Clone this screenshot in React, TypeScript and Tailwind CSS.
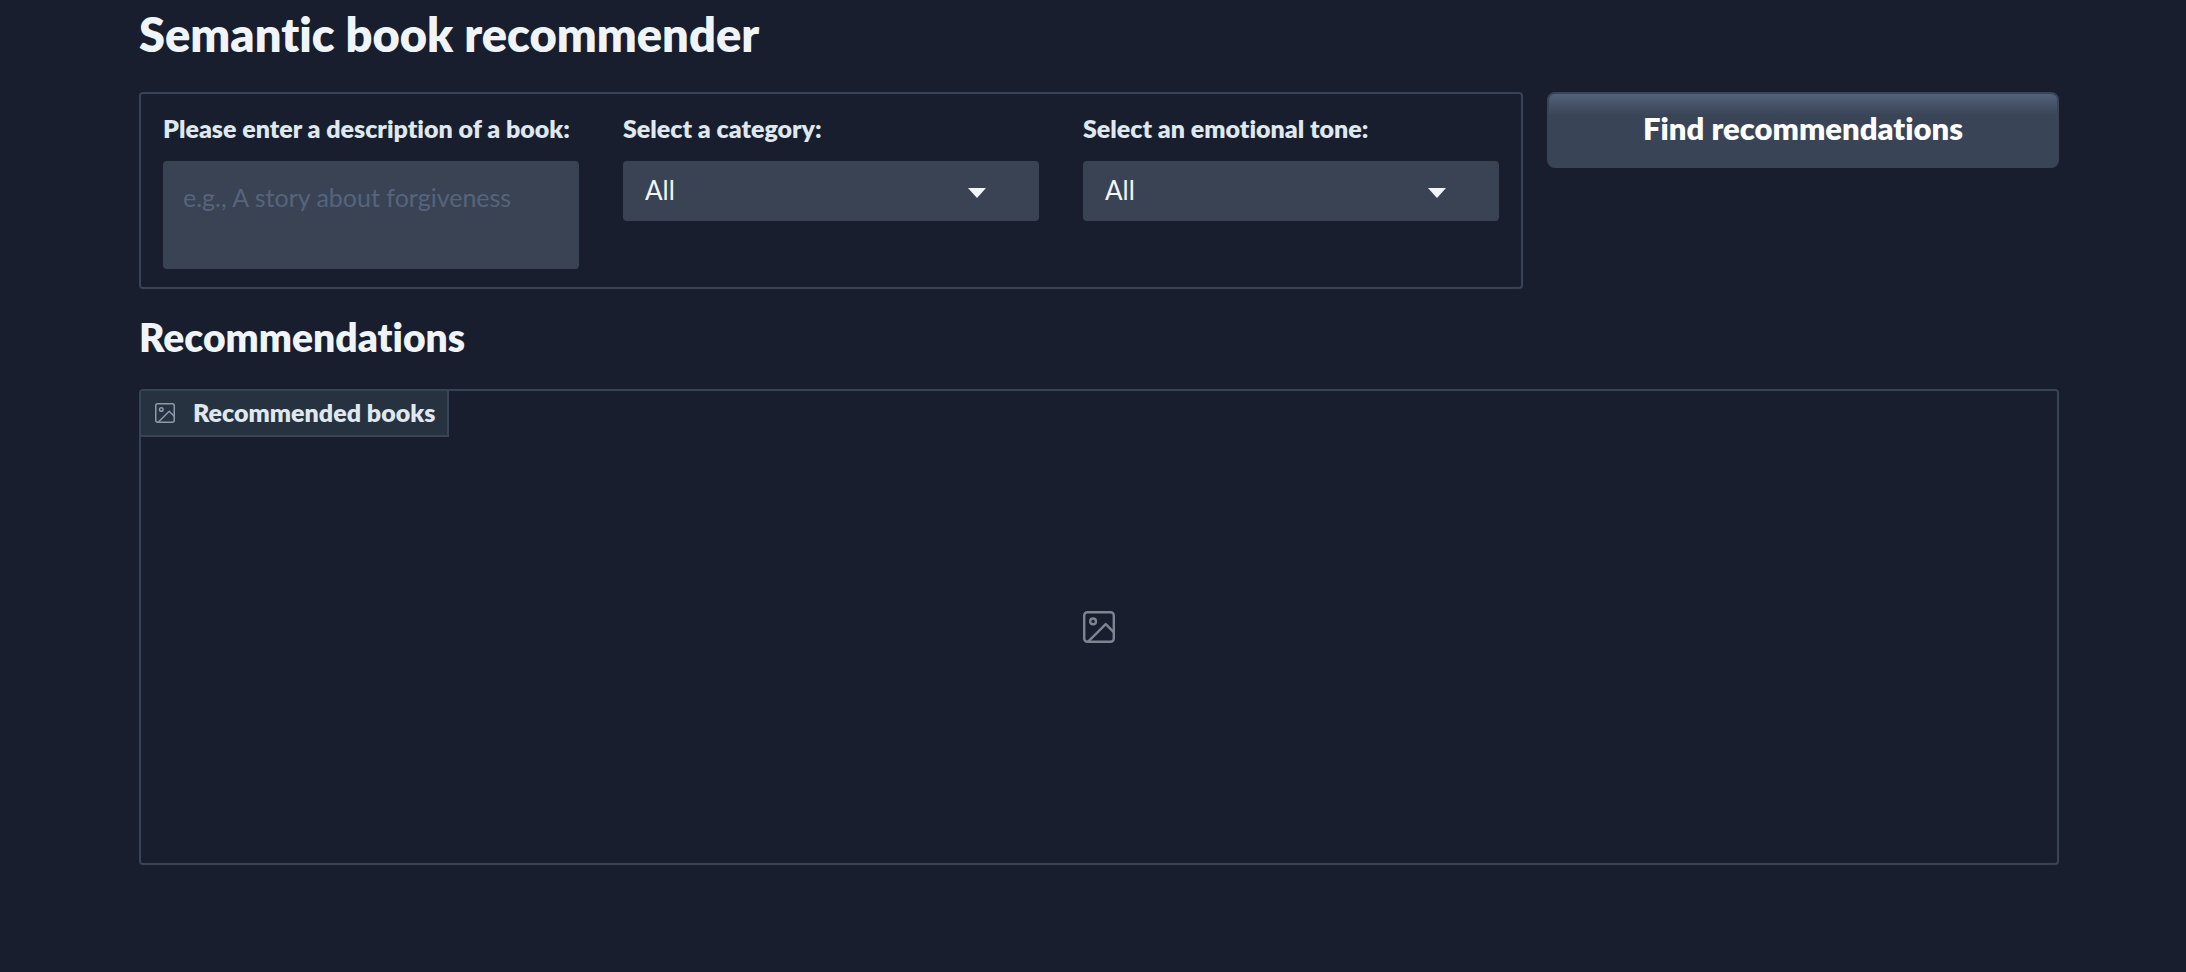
import { useState } from "react";

const CATEGORIES = ["All", "Fiction", "Nonfiction", "Children's Fiction", "Children's Nonfiction"];
const TONES = ["All", "Happy", "Surprising", "Angry", "Suspenseful", "Sad"];

function ImageIcon({ className }: { className: string }) {
  return (
    <svg
      className={className}
      viewBox="0 0 20 20"
      fill="none"
      stroke="currentColor"
      strokeWidth="1.5"
      strokeLinecap="round"
      strokeLinejoin="round"
      aria-hidden="true"
    >
      <rect x="0.75" y="0.75" width="18.5" height="18.5" rx="2" />
      <circle cx="6.3" cy="6.5" r="1.8" />
      <path d="M19.2 13.2 14.2 8.2 3.2 19.2" />
    </svg>
  );
}

type DropdownProps = { id: string; label: string; options: string[] };

function Dropdown({ id, label, options }: DropdownProps) {
  const [value, setValue] = useState(options[0]);
  return (
    <div className="flex min-w-0 flex-col gap-[17px]">
      <label htmlFor={id} className="text-[25px]/8 font-extrabold whitespace-nowrap text-[#dfe7ef]">
        {label}
      </label>
      <div className="relative">
        <select
          id={id}
          value={value}
          onChange={(e) => setValue(e.target.value)}
          className="block h-15 w-full appearance-none rounded bg-[#394354] px-[22px] pb-0.5 text-[26px] text-[#f1f5f9] outline-none"
        >
          {options.map((o) => (
            <option key={o}>{o}</option>
          ))}
        </select>
        <svg
          className="pointer-events-none absolute top-[27px] right-[53px] h-[10px] w-[18px] fill-[#f1f5f9]"
          viewBox="0 0 18 10"
          aria-hidden="true"
        >
          <path d="M0 0h18L9 10z" />
        </svg>
      </div>
    </div>
  );
}

export default function App() {
  const [query, setQuery] = useState("");
  return (
    <main className="min-h-screen bg-[#181e2d] pr-[127px] pb-16 pl-[139px] font-['Lato','Open_Sans',sans-serif] text-[#eff4f9] [font-variant-ligatures:none]">
      <h1 className="pt-1.5 text-[47px]/14 font-extrabold">Semantic book recommender</h1>

      <div className="mt-7.5 grid grid-cols-[173fr_64fr] items-start gap-6">
        <div className="grid grid-cols-3 items-start gap-11 rounded border-2 border-[#374356] px-[22px] py-[18px]">
          <div className="flex min-w-0 flex-col gap-[17px]">
            <label htmlFor="query" className="text-[25px]/8 font-extrabold whitespace-nowrap text-[#dfe7ef]">
              Please enter a description of a book:
            </label>
            <textarea
              id="query"
              value={query}
              onChange={(e) => setQuery(e.target.value)}
              placeholder="e.g., A story about forgiveness"
              className="block h-27 w-full resize-none rounded bg-[#394354] px-5 py-[18px] text-[25px]/9 outline-none placeholder:text-[#56647d]"
            />
          </div>
          <Dropdown id="category" label="Select a category:" options={CATEGORIES} />
          <Dropdown id="tone" label="Select an emotional tone:" options={TONES} />
        </div>

        <button
          type="button"
          className="h-19 rounded-lg border-2 border-[#394556] bg-[#394354] bg-linear-to-b from-[#52607a] to-[#394556] to-30% pb-1 text-[31px] font-extrabold text-white"
        >
          Find recommendations
        </button>
      </div>

      <h2 className="mt-6 text-[39px]/12 font-extrabold">Recommendations</h2>

      <section
        aria-label="Recommended books"
        className="relative mt-7 flex h-119 items-center justify-center rounded border-2 border-[#374356]"
      >
        <div className="absolute top-0 left-0 flex h-[46px] items-center gap-[18px] border-r-2 border-b-2 border-[#394556] bg-[#273240] pr-3 pl-[14px] text-[25px] font-extrabold text-[#dfe7ef]">
          <ImageIcon className="size-5 text-[#8d9aab]" />
          Recommended books
        </div>
        <ImageIcon className="size-8 text-[#7d8591]" />
      </section>
    </main>
  );
}
